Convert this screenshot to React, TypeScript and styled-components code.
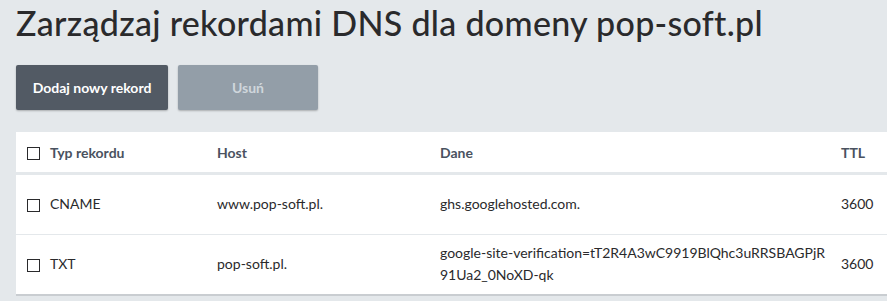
import { createGlobalStyle } from "styled-components";
import styled from "styled-components";

const GlobalStyle = createGlobalStyle`
  body {
    margin: 0;
    background: #e4e8eb;
    font-family: Lato, "Open Sans", sans-serif;
  }
`;

interface DnsRecord {
  type: string;
  host: string;
  data: string[];
  ttl: number;
}

const records: DnsRecord[] = [
  { type: "CNAME", host: "www.pop-soft.pl.", data: ["ghs.googlehosted.com."], ttl: 3600 },
  {
    type: "TXT",
    host: "pop-soft.pl.",
    data: ["google-site-verification=tT2R4A3wC9919BlQhc3uRRSBAGPjR", "91Ua2_0NoXD-qk"],
    ttl: 3600,
  },
];

const App = () => {
  return (
    <Page>
      <GlobalStyle />
      <Title>Zarządzaj rekordami DNS dla domeny pop-soft.pl</Title>
      <Toolbar>
        <Button>Dodaj nowy rekord</Button>
        <Button $disabled>Usuń</Button>
      </Toolbar>
      <Table>
        <HeadRow>
          <CheckCell>
            <Check />
            Typ rekordu
          </CheckCell>
          <Cell>Host</Cell>
          <Cell>Dane</Cell>
          <Cell>TTL</Cell>
        </HeadRow>
        {records.map((r) => (
          <Row key={r.type}>
            <CheckCell>
              <Check />
              {r.type}
            </CheckCell>
            <Cell>{r.host}</Cell>
            <Cell>
              {r.data.map((line) => (
                <div key={line}>{line}</div>
              ))}
            </Cell>
            <Cell>{r.ttl}</Cell>
          </Row>
        ))}
      </Table>
    </Page>
  );
};

export default App;

const Page = styled.div`
  padding: 0 0 0 16px;
  height: 301px;
  overflow: hidden;
`;

const Title = styled.h1`
  margin: 0;
  padding: 2px 0 0 0;
  height: 60px;
  box-sizing: border-box;
  font-size: 34px;
  font-weight: 500;
  color: #2a2a2c;
  letter-spacing: 0.3px;
`;

const Toolbar = styled.div`
  display: flex;
  gap: 10px;
  margin-top: 5px;
`;

const Button = styled.button<{ $disabled?: boolean }>`
  height: 45px;
  padding: 0;
  width: ${(p) => (p.$disabled ? "140px" : "152px")};
  border: none;
  border-radius: 2px;
  font-family: Lato, sans-serif;
  font-size: 14px;
  font-weight: 700;
  background: ${(p) => (p.$disabled ? "#939ea8" : "#525a64")};
  color: ${(p) => (p.$disabled ? "#cfd6dc" : "#ffffff")};
  box-shadow: 0 1px 2px rgba(0, 0, 0, 0.25);
`;

const Table = styled.div`
  margin-top: 22px;
  background: #ffffff;
  box-shadow: 0 2px 0 #c9cdd1;
`;

const grid = `
  display: grid;
  grid-template-columns: 201px 223px 401px 1fr;
  align-items: center;
`;

const HeadRow = styled.div`
  ${grid}
  height: 40px;
  border-bottom: 3px solid #e4e8eb;
  color: #4a5260;
  font-weight: 700;
  font-size: 14px;
`;

const Row = styled.div`
  ${grid}
  height: 59px;
  color: #2a2a2c;
  font-size: 14px;
  line-height: 22px;
  padding-bottom: 2px;
  box-sizing: border-box;
  & + & {
    border-top: 1px solid #e4e8eb;
    height: 60px;
  }
`;

const Cell = styled.div`
  padding-right: 8px;
`;

const CheckCell = styled.div`
  display: flex;
  align-items: center;
  gap: 10px;
  padding-left: 11px;
`;

const Check = styled.span`
  display: inline-block;
  width: 11px;
  height: 11px;
  border: 1px solid #2a2a2c;
  margin-top: 3px;
`;
